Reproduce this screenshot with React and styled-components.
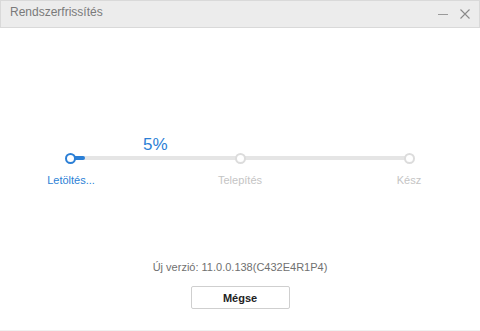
import styled, { createGlobalStyle } from 'styled-components'

const Global = createGlobalStyle`
  html, body { margin: 0; padding: 0; background: #fff; }
  body { font-family: "Liberation Sans", Arial, sans-serif; }
`

const Window = styled.div`
  width: 480px;
  height: 331px;
  box-sizing: border-box;
  display: flex;
  flex-direction: column;
  border-bottom: 1px solid #f0f0f0;
`

const TitleBar = styled.div`
  height: 28px;
  box-sizing: border-box;
  display: flex;
  align-items: center;
  justify-content: space-between;
  padding: 0 8px 0 9px;
  background: #ececec;
  border: 1px solid #d9d9d9;
`

const Title = styled.span`
  font-size: 12px;
  color: #7a7a7a;
  margin-top: -5px;
`

const Controls = styled.div`
  display: flex;
  gap: 10px;
  align-items: center;
`

const Body = styled.div`
  flex: 1;
  display: flex;
  flex-direction: column;
  align-items: center;
`

const Stepper = styled.div`
  margin-top: 108px;
  width: 380px;
  position: relative;
`

const Percent = styled.div`
  position: absolute;
  left: 93px;
  top: -1px;
  font-size: 17px;
  color: #2b7fd6;
`

const Track = styled.div`
  margin: 20px 21px 0;
  height: 4px;
  background: #e5e5e5;
  border-radius: 2px;
  position: relative;
  display: flex;
  justify-content: space-between;
  align-items: center;
`

const Fill = styled.div`
  position: absolute;
  left: 0;
  top: 0;
  height: 4px;
  background: #2b7fd6;
  border-radius: 2px;
`

const Dot = styled.span`
  width: 7px;
  height: 7px;
  border-radius: 50%;
  background: #fff;
  border: 2.5px solid ${({ $active }) => ($active ? '#2b7fd6' : '#dcdcdc')};
  position: relative;
  z-index: 1;
  margin: 0 -6px;
`

const Labels = styled.div`
  margin-top: 14px;
  padding: 0 21px;
  display: flex;
  justify-content: space-between;
  font-size: 11px;
`

const Label = styled.span`
  width: 0;
  display: flex;
  justify-content: center;
  white-space: nowrap;
  color: ${({ $active }) => ($active ? '#2b7fd6' : '#c4c4c4')};
`

const Version = styled.div`
  margin-top: 75px;
  font-size: 11px;
  color: #707070;
`

const Button = styled.button`
  margin-top: 13px;
  width: 99px;
  height: 23px;
  background: #fff;
  border: 1px solid #cfcfcf;
  border-radius: 2px;
  font-family: "Liberation Sans", Arial, sans-serif;
  font-size: 11px;
  font-weight: bold;
  color: #222;
  padding: 0;
`

export default function App() {
  return (
    <>
      <Global />
      <Window>
        <TitleBar>
          <Title>Rendszerfrissítés</Title>
          <Controls>
            <svg width="12" height="12" viewBox="0 0 12 12">
              <path d="M1 6.5h10" stroke="#9a9a9a" strokeWidth="1" />
            </svg>
            <svg width="12" height="12" viewBox="0 0 12 12">
              <path d="M1.5 1.5l9 9M10.5 1.5l-9 9" stroke="#8a8a8a" strokeWidth="1.1" />
            </svg>
          </Controls>
        </TitleBar>
        <Body>
          <Stepper>
            <Percent>5%</Percent>
            <Track>
              <Fill style={{ width: '14px' }} />
              <Dot $active />
              <Dot />
              <Dot />
            </Track>
            <Labels>
              <Label $active>Letöltés...</Label>
              <Label>Telepítés</Label>
              <Label>Kész</Label>
            </Labels>
          </Stepper>
          <Version>Új verzió: 11.0.0.138(C432E4R1P4)</Version>
          <Button>Mégse</Button>
        </Body>
      </Window>
    </>
  )
}
